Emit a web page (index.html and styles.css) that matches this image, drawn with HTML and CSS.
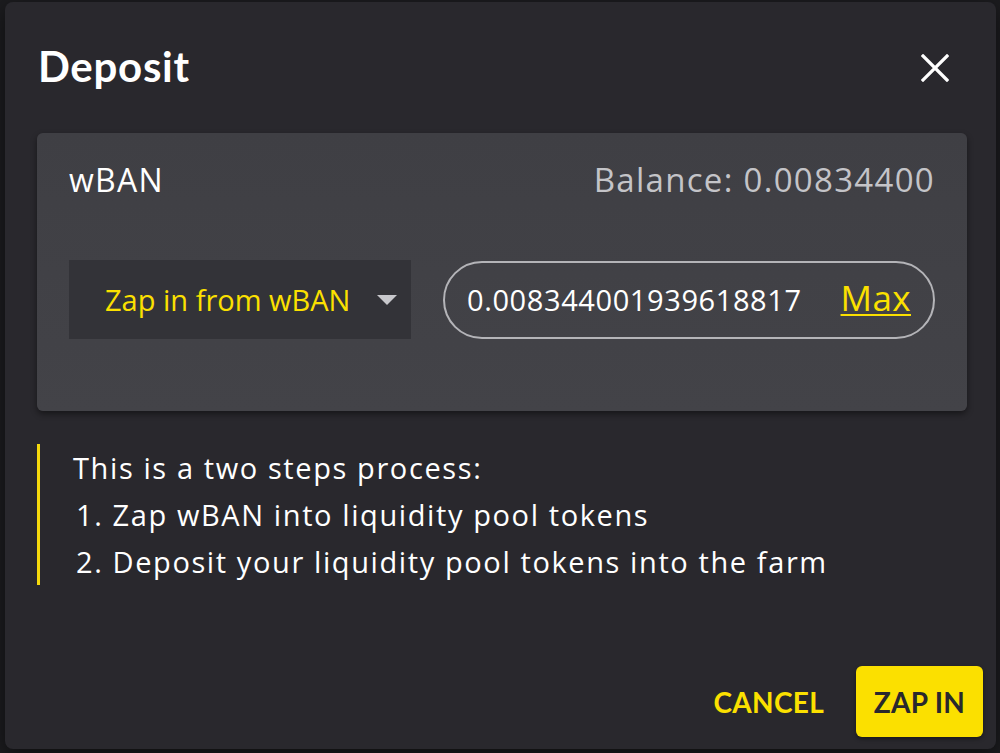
FILE: index.html
```html
<!DOCTYPE html>
<html lang="en">

<head>
    <meta charset="UTF-8">
    <meta name="viewport" content="width=device-width, initial-scale=1.0">
    <title>Deposit</title>
    <link rel="stylesheet" href="styles.css">
</head>

<body>

    <div class="dialog">
        <div class="dialog-header">
            <h2 class="title">Deposit</h2>
            <button class="close" aria-label="close">
                <svg width="28" height="28" viewBox="0 0 28 28">
                    <path d="M2 2 L26 26 M26 2 L2 26" stroke="#fff" stroke-width="3.2" stroke-linecap="square" />
                </svg>
            </button>
        </div>

        <div class="card">
            <div class="card-top">
                <span class="token">wBAN</span>
                <span class="balance">Balance: 0.00834400</span>
            </div>
            <div class="card-row">
                <div class="select">
                    <span>Zap in from wBAN</span>
                    <span class="caret"></span>
                </div>
                <div class="amount">
                    <span class="amount-value">0.008344001939618817</span>
                    <a class="max" href="#">Max</a>
                </div>
            </div>
        </div>

        <div class="notice">
            <p>This is a two steps process:</p>
            <p class="step">1. Zap wBAN into liquidity pool tokens</p>
            <p class="step">2. Deposit your liquidity pool tokens into the farm</p>
        </div>

        <div class="actions">
            <button class="btn btn-text">CANCEL</button>
            <button class="btn btn-primary">ZAP IN</button>
        </div>
    </div>

</body>

</html>
```

FILE: styles.css
```css
* {
    margin: 0;
    padding: 0;
    box-sizing: border-box;
}

body {
    background-color: #1c1c1f;
    font-family: "Open Sans", "Noto Sans", sans-serif;
    color: #fff;
    height: 753px;
    overflow: hidden;
    padding: 2px 4px 0 5px;
}

.dialog {
    width: 991px;
    height: 747px;
    background-color: #29282d;
    border-radius: 8px;
    box-shadow: 0 6px 20px rgba(0, 0, 0, .5);
    padding: 0 13px 12px 32px;
    display: flex;
    flex-direction: column;
}

.dialog-header {
    height: 131px;
    display: flex;
    align-items: center;
    justify-content: space-between;
    padding: 0 34px 0 1px;
}

.title {
    font-family: Lato, sans-serif;
    font-size: 42px;
    font-weight: 700;
    letter-spacing: .7px;
    margin-top: -3px;
}

.close {
    background: none;
    border: none;
    width: 28px;
    height: 28px;
    display: flex;
    cursor: pointer;
}

.card {
    width: 930px;
    height: 278px;
    background: linear-gradient(#3f3f44, #434348);
    border-radius: 6px;
    box-shadow: 0 3px 6px rgba(0, 0, 0, .45);
    padding: 0 32px;
}

.card-top {
    height: 92px;
    display: flex;
    align-items: center;
    justify-content: space-between;
    font-size: 32px;
    letter-spacing: 1.3px;
}

.balance {
    color: #c4c4c8;
    font-size: 33px;
}

.card-row {
    margin-top: 35px;
    display: flex;
    align-items: center;
    gap: 32px;
}

.select {
    width: 342px;
    height: 79px;
    background-color: #333338;
    display: flex;
    align-items: center;
    justify-content: space-between;
    padding: 0 14px 0 36px;
    color: #fbe000;
    font-size: 29px;
}

.caret {
    width: 0;
    height: 0;
    border-left: 10px solid transparent;
    border-right: 10px solid transparent;
    border-top: 10px solid #c8c8cc;
}

.amount {
    width: 492px;
    height: 78px;
    border: 2px solid #b4b4b8;
    border-radius: 39px;
    display: flex;
    align-items: center;
    justify-content: space-between;
    padding: 0 22px 0 22px;
    font-size: 29px;
    letter-spacing: .6px;
}

.max {
    color: #fbe000;
    font-size: 35px;
    letter-spacing: .4px;
    text-decoration: underline;
    text-underline-offset: 3px;
    text-decoration-thickness: 2px;
    margin-top: -4px;
}

.notice {
    margin-top: 33px;
    border-left: 3px solid #f5d90c;
    padding-left: 33px;
    font-size: 29px;
    line-height: 47px;
    letter-spacing: 1.6px;
}

.step {
    padding-left: 3px;
}

.actions {
    margin-top: auto;
    display: flex;
    justify-content: flex-end;
    align-items: center;
    gap: 16px;
}

.btn {
    font-family: Lato, "Noto Sans", sans-serif;
    font-size: 28px;
    font-weight: 700;
    border: none;
    cursor: pointer;
    letter-spacing: .3px;
}

.btn-text {
    background: none;
    color: #fbe000;
    height: 71px;
    padding: 0 16px;
}

.btn-primary {
    width: 127px;
    height: 71px;
    background-color: #fbe000;
    color: #29282d;
    border-radius: 6px;
    box-shadow: 0 2px 4px rgba(0, 0, 0, .4);
}
```
